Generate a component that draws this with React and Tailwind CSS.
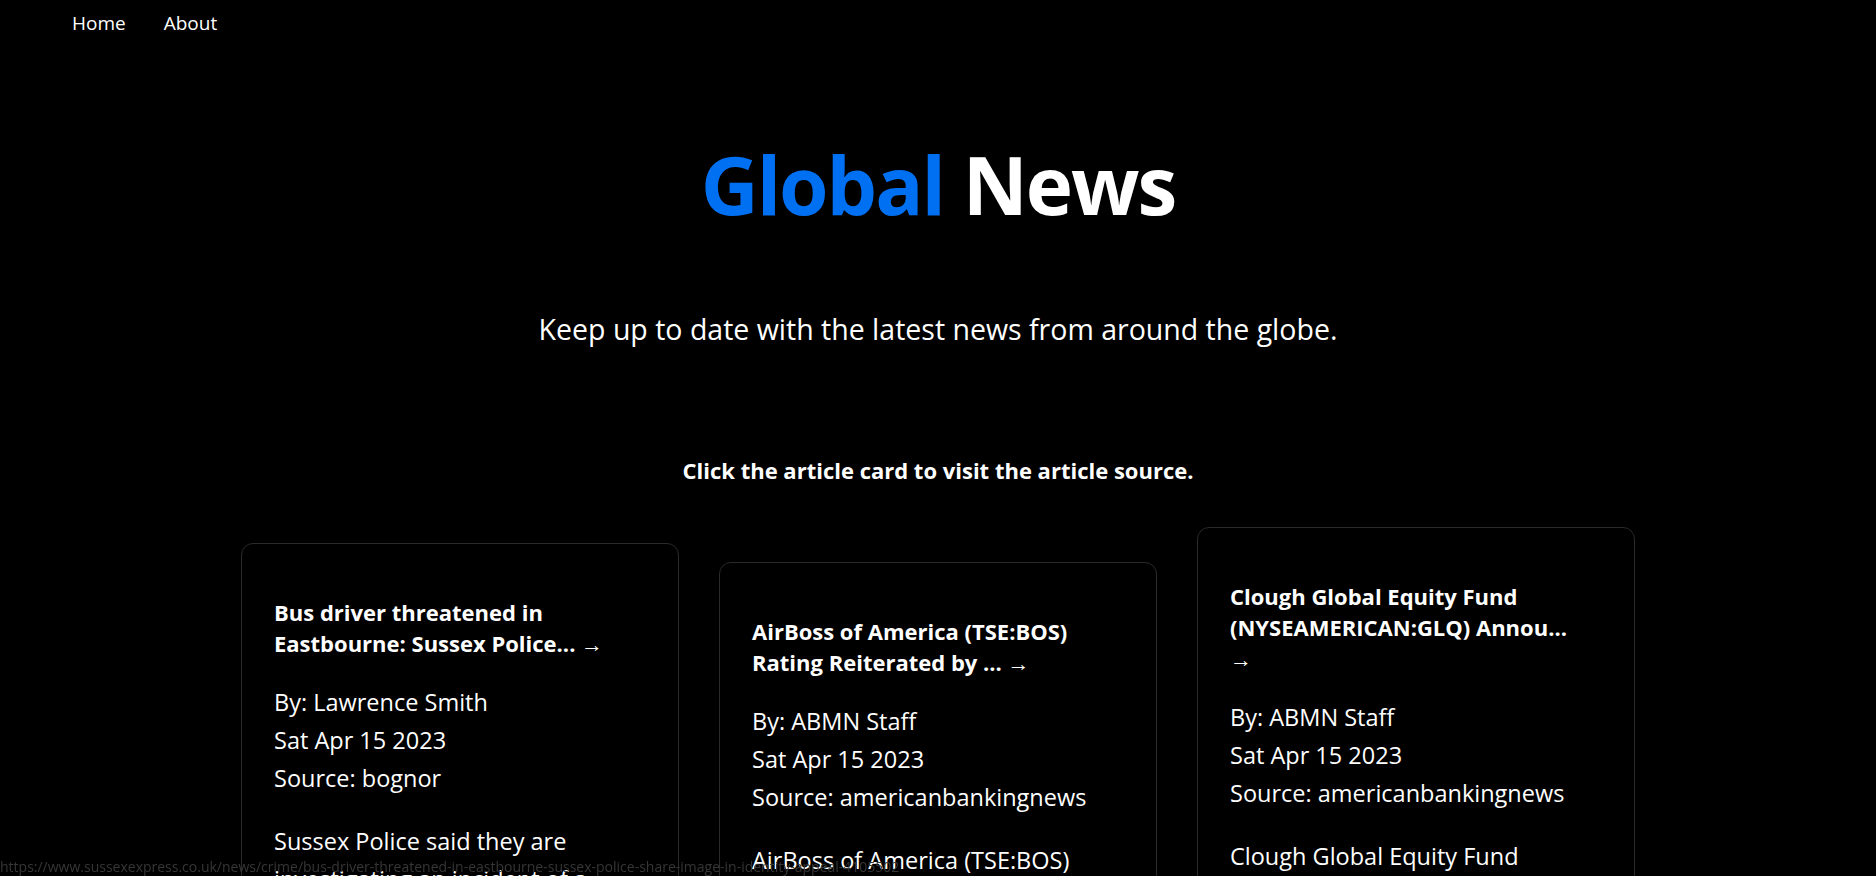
import React from 'react';

const articles = [
  {
    title: ['Bus driver threatened in', 'Eastbourne: Sussex Police... →'],
    author: 'Lawrence Smith',
    date: 'Sat Apr 15 2023',
    source: 'bognor',
    description: [
      'Sussex Police said they are',
      'investigating an incident of a',
      'public bus driver being',
      'threatened in Eastbourne.',
    ],
  },
  {
    title: ['AirBoss of America (TSE:BOS)', 'Rating Reiterated by ... →'],
    author: 'ABMN Staff',
    date: 'Sat Apr 15 2023',
    source: 'americanbankingnews',
    description: ['AirBoss of America (TSE:BOS)', 'had its target price cut by', 'National Bankshares.'],
  },
  {
    title: ['Clough Global Equity Fund', '(NYSEAMERICAN:GLQ) Annou...', '→'],
    author: 'ABMN Staff',
    date: 'Sat Apr 15 2023',
    source: 'americanbankingnews',
    description: ['Clough Global Equity Fund', '(NYSEAMERICAN:GLQ)', 'announced a monthly', 'dividend on Friday.'],
  },
];

const font = { fontFamily: '"Segoe UI", "Open Sans", "Noto Sans", sans-serif' };

function ArticleCard({ article }) {
  return (
    <a
      href="#"
      className="block w-[438px] shrink-0 rounded-xl border border-[#2a2a2a] bg-black px-8 pt-[53px] pb-8 text-white"
    >
      <h2 className="text-[22px] leading-[31px] font-bold whitespace-nowrap">
        {article.title.map((line, i) => (
          <span key={i} className="block">
            {line}
          </span>
        ))}
      </h2>
      <div className="mt-[24px] text-[23.5px] leading-[38px]">
        <p>By: {article.author}</p>
        <p>{article.date}</p>
        <p>Source: {article.source}</p>
      </div>
      <p className="mt-[25px] text-[23.5px] leading-[38px] whitespace-nowrap">
        {article.description.map((line, i) => (
          <span key={i} className="block">
            {line}
          </span>
        ))}
      </p>
    </a>
  );
}

export default function App() {
  return (
    <div className="min-h-screen bg-black text-white" style={font}>
      <nav className="flex h-[46px] items-center gap-[38px] pl-[72px] text-[19px]">
        <a href="#">Home</a>
        <a href="#">About</a>
      </nav>

      <header className="flex flex-col items-center">
        <h1 className="mt-[94px] text-[80px] leading-[88px] font-bold tracking-[-2px]">
          <span className="text-[#0070f3]">Global</span> News
        </h1>
        <p className="mt-[82px] text-[28.5px] leading-[38px]">
          Keep up to date with the latest news from around the globe.
        </p>
        <p className="mt-[107px] text-[22px] leading-[30px] font-bold">
          Click the article card to visit the article source.
        </p>
      </header>

      <main className="mt-[42px] flex items-center justify-center gap-[40px] pb-16">
        {articles.map((article, i) => (
          <ArticleCard key={i} article={article} />
        ))}
      </main>

      <div className="pointer-events-none fixed bottom-0 left-0 text-[14px] leading-[18px] whitespace-nowrap text-[#363636]">
        https://www.sussexexpress.co.uk/news/crime/bus-driver-threatened-in-eastbourne-sussex-police-share-image-in-identity-appeal-4105502
      </div>
    </div>
  );
}
